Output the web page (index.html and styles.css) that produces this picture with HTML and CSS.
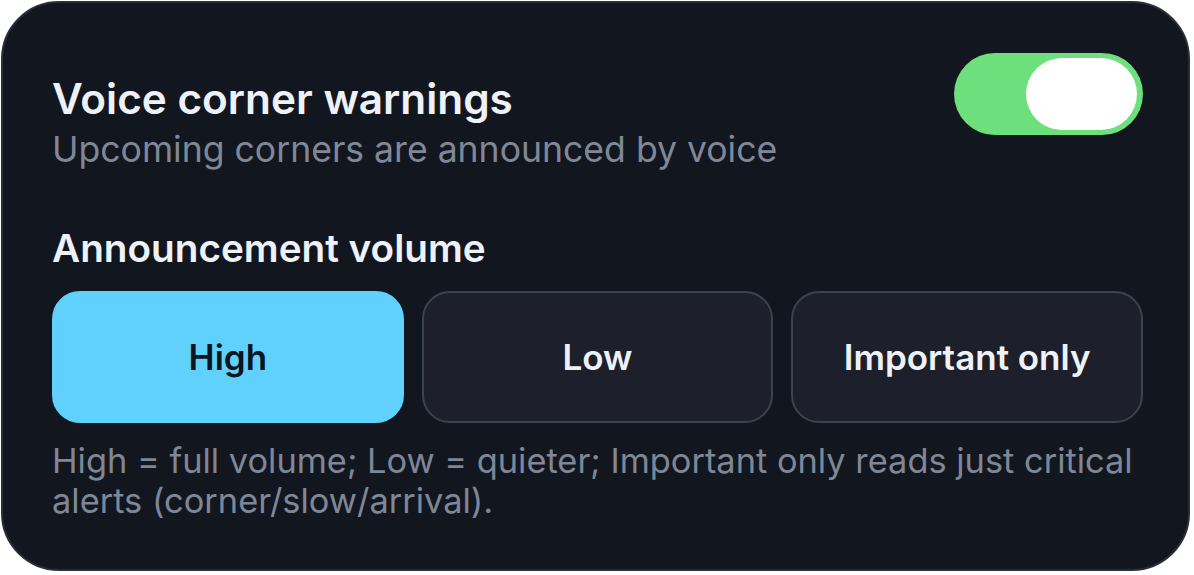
FILE: index.html
```html
<!DOCTYPE html>
<html lang="en">
<head>
    <meta charset="UTF-8">
    <title>Voice corner warnings</title>
    <link rel="stylesheet" href="styles.css">
</head>
<body>

    <div class="card">
        <div class="header">
            <div class="header-text">
                <h1>Voice corner warnings</h1>
                <p class="subtitle">Upcoming corners are announced by voice</p>
            </div>
            <button class="toggle on" onclick="this.classList.toggle('on')">
                <span class="knob"></span>
            </button>
        </div>

        <h2>Announcement volume</h2>
        <div class="options">
            <button class="option active">High</button>
            <button class="option">Low</button>
            <button class="option">Important only</button>
        </div>

        <p class="note">High = full volume; Low = quieter; Important only reads just critical alerts (corner/slow/arrival).</p>
    </div>

    <script>
        document.querySelectorAll(".option").forEach(btn => {
            btn.addEventListener("click", () => {
                document.querySelectorAll(".option").forEach(b => b.classList.remove("active"));
                btn.classList.add("active");
            });
        });
    </script>

</body>
</html>
```

FILE: styles.css
```css
body {
    margin: 0;
    background: #ffffff;
    font-family: Inter, "Noto Sans", sans-serif;
}
.card {
    box-sizing: border-box;
    width: 1189px;
    height: 570px;
    margin: 1px 0 0 1px;
    padding: 50px 45px 0 49px;
    background: #12161e;
    border: 2px solid #2a2e37;
    border-radius: 58px;
}
.header {
    display: flex;
    justify-content: space-between;
    align-items: flex-start;
}
h1 {
    margin: 22px 0 0;
    font-size: 42.3px;
    line-height: 48px;
    font-weight: 600;
    color: #eef2f8;
}
.subtitle {
    margin: 3px 0 0;
    font-size: 35.6px;
    line-height: 48px;
    color: #808898;
}
.toggle {
    position: relative;
    width: 189px;
    height: 82px;
    padding: 0;
    border: none;
    border-radius: 41px;
    background: #3a404c;
    cursor: pointer;
}
.toggle.on {
    background: #6ddf7c;
}
.knob {
    position: absolute;
    top: 5px;
    left: 6px;
    width: 111px;
    height: 72px;
    border-radius: 36px;
    background: #ffffff;
}
.toggle.on .knob {
    left: auto;
    right: 6px;
}
h2 {
    margin: 50px 0 0;
    font-size: 38.7px;
    line-height: 48px;
    font-weight: 600;
    color: #eef2f8;
}
.options {
    display: grid;
    grid-template-columns: repeat(3, 1fr);
    gap: 18px;
    margin-top: 19px;
}
.option {
    height: 132px;
    border: 2px solid #3c424e;
    border-radius: 28px;
    background: #1d202a;
    color: #eef2f8;
    font-family: Inter, "Noto Sans", sans-serif;
    font-size: 35px;
    font-weight: 600;
    cursor: pointer;
}
.option.active {
    background: #5fd1fc;
    border-color: #5fd1fc;
    color: #0d1520;
}
.note {
    margin: 18px 0 0;
    font-size: 34.4px;
    line-height: 40px;
    color: #7f8797;
}
```
